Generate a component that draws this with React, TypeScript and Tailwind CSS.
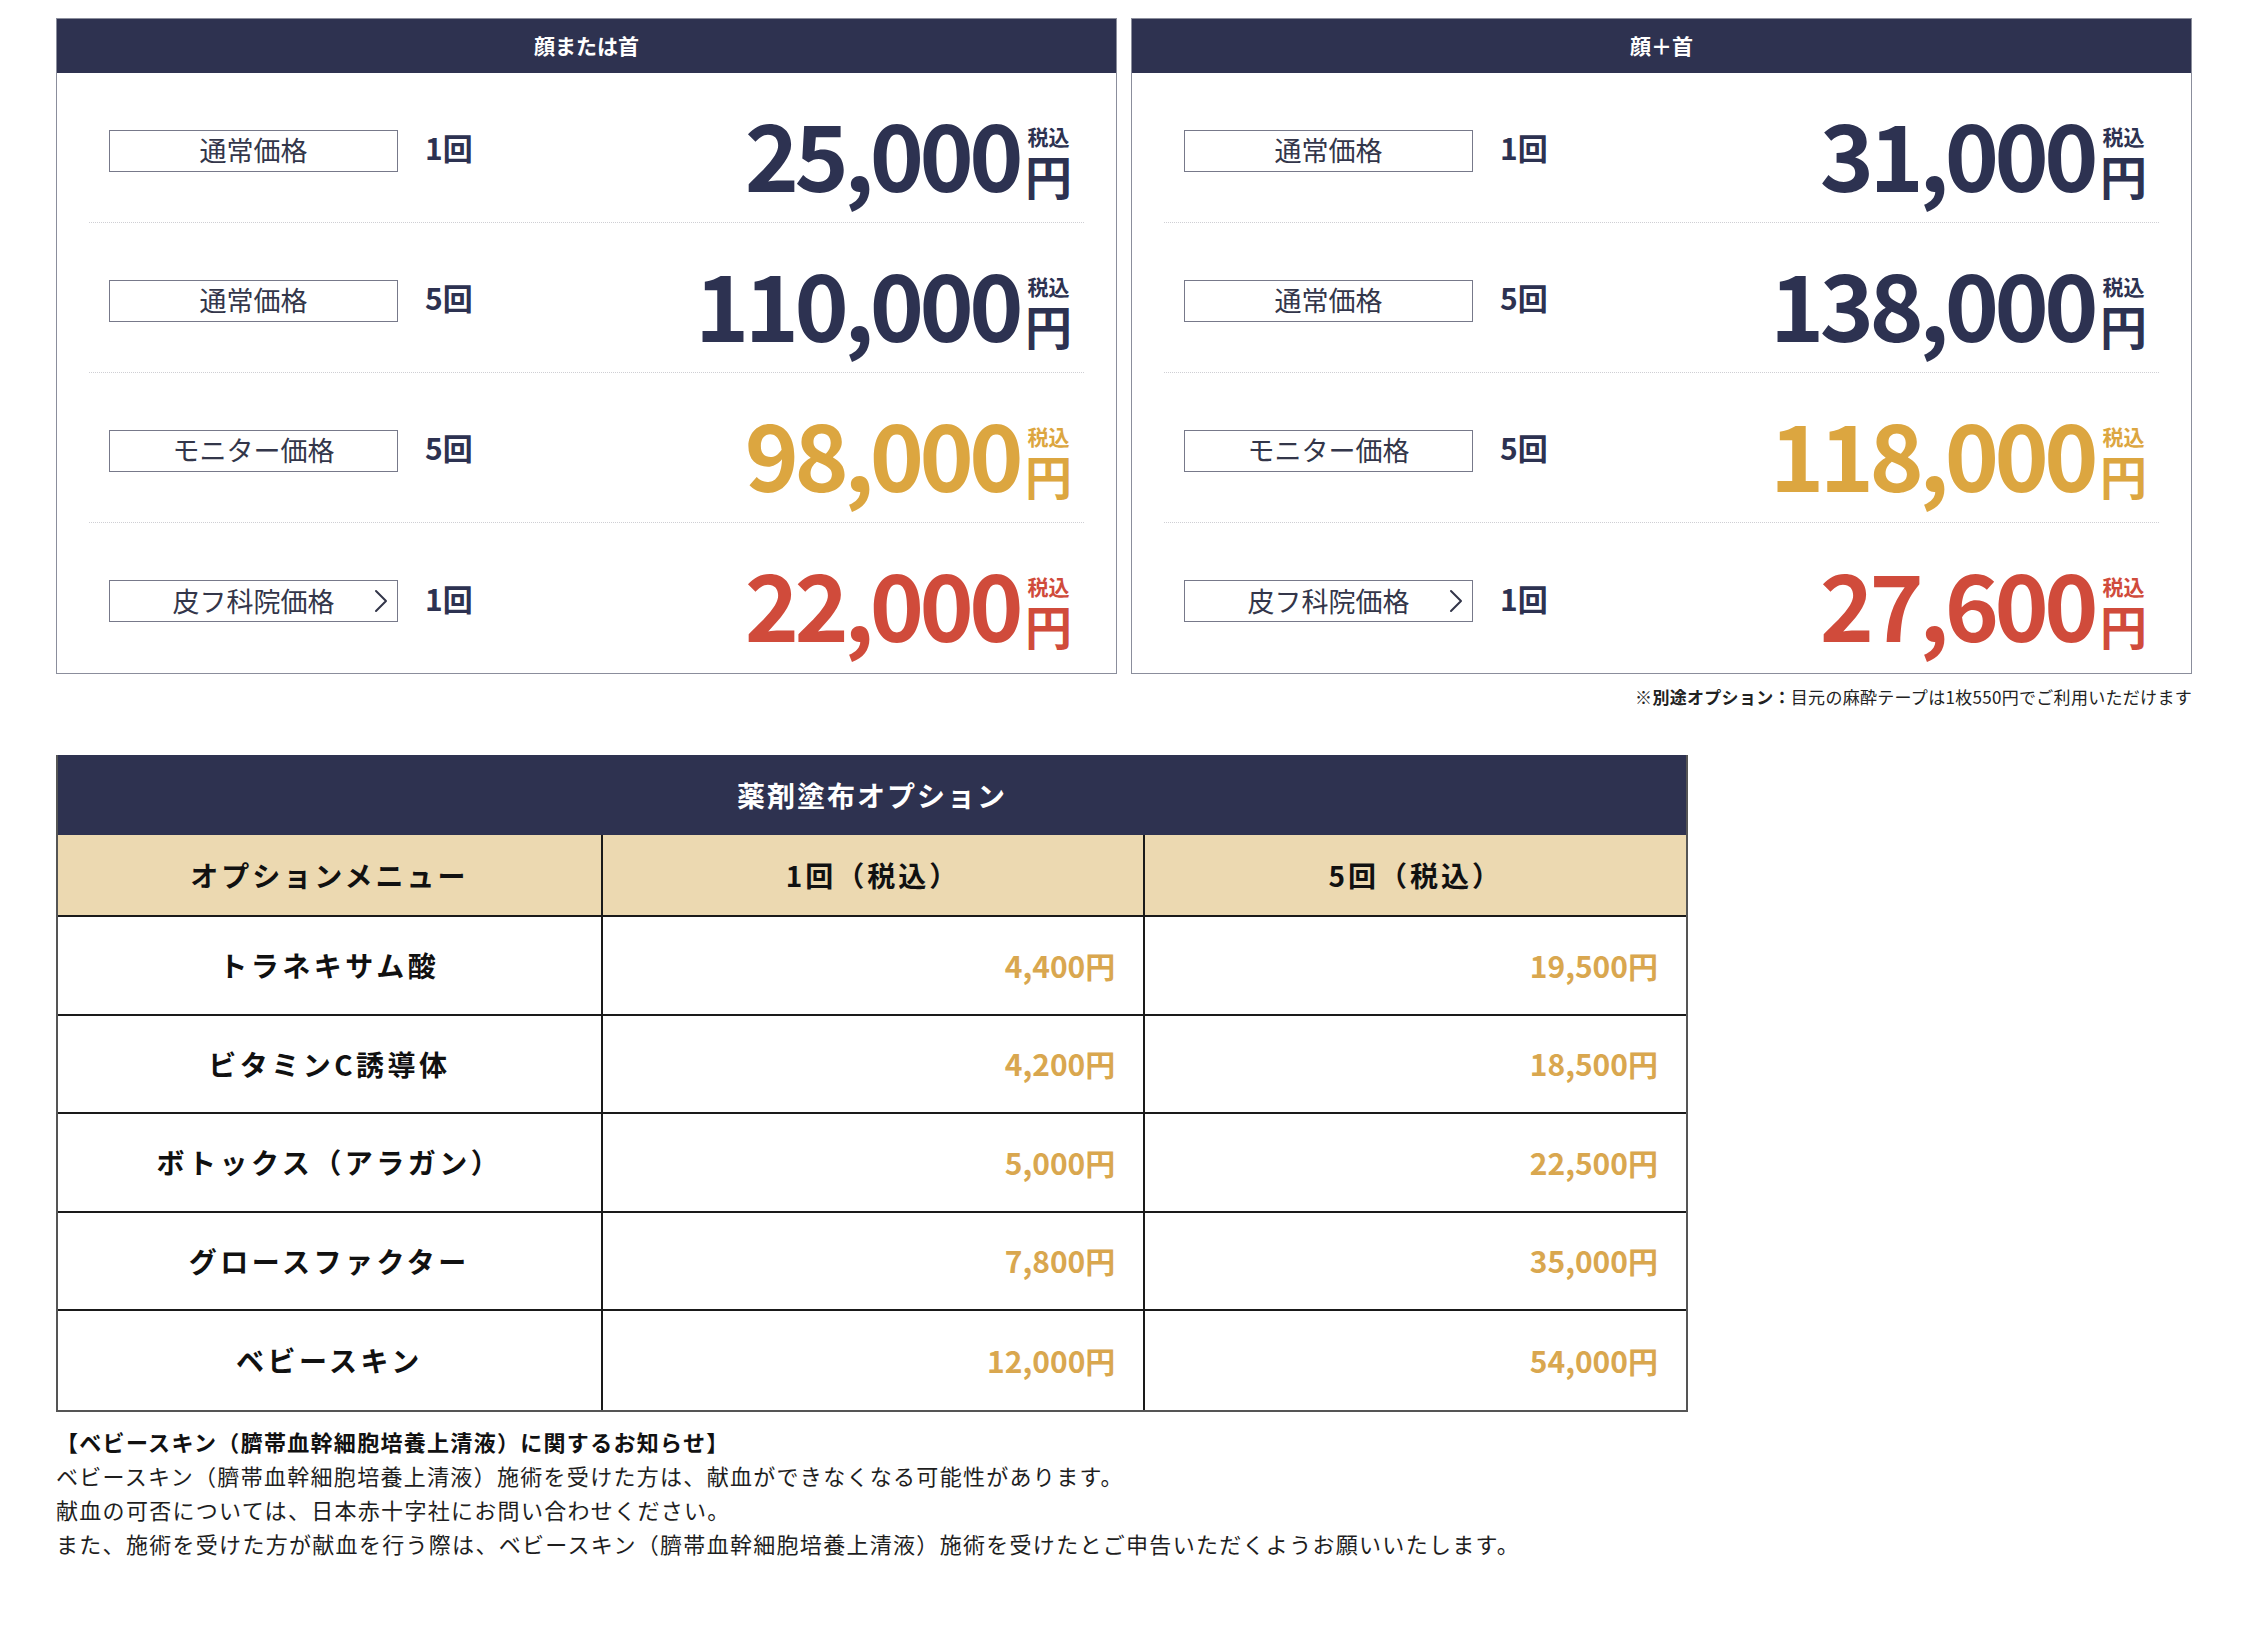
import React from 'react';

type Tone = 'navy' | 'gold' | 'red';

type PriceRow = {
    label: string;
    count: string;
    price: string;
    tone: Tone;
    arrow?: boolean;
};

const toneText: Record<Tone, string> = {
    navy: 'text-[#2d3251]',
    gold: 'text-[#dca640]',
    red: 'text-[#d04b3b]',
};

const faceOrNeck: PriceRow[] = [
    { label: '通常価格', count: '1回', price: '25,000', tone: 'navy' },
    { label: '通常価格', count: '5回', price: '110,000', tone: 'navy' },
    { label: 'モニター価格', count: '5回', price: '98,000', tone: 'gold' },
    { label: '皮フ科院価格', count: '1回', price: '22,000', tone: 'red', arrow: true },
];

const faceAndNeck: PriceRow[] = [
    { label: '通常価格', count: '1回', price: '31,000', tone: 'navy' },
    { label: '通常価格', count: '5回', price: '138,000', tone: 'navy' },
    { label: 'モニター価格', count: '5回', price: '118,000', tone: 'gold' },
    { label: '皮フ科院価格', count: '1回', price: '27,600', tone: 'red', arrow: true },
];

const options = [
    { name: 'トラネキサム酸', once: '4,400円', five: '19,500円' },
    { name: 'ビタミンC誘導体', once: '4,200円', five: '18,500円' },
    { name: 'ボトックス（アラガン）', once: '5,000円', five: '22,500円' },
    { name: 'グロースファクター', once: '7,800円', five: '35,000円' },
    { name: 'ベビースキン', once: '12,000円', five: '54,000円' },
];

const Chevron = () => (
    <svg className="absolute right-[8px] top-1/2 -translate-y-1/2" width="16" height="24" viewBox="0 0 16 24" fill="none">
        <polyline points="3,2 13,12 3,22" stroke="#33364a" strokeWidth="2" strokeLinecap="round" strokeLinejoin="round" />
    </svg>
);

const PriceCard = ({ title, rows }: { title: string; rows: PriceRow[] }) => {
    return (
        <div className="border border-[#8b8e9c] bg-white">
            <div className="h-[54px] bg-[#2e3250] flex items-center justify-center text-white font-bold text-[21px]">
                {title}
            </div>
            <div className="px-[32px]">
                {rows.map((row, index) => (
                    <div
                        key={index}
                        className={
                            index < rows.length - 1
                                ? 'h-[150px] flex items-center border-b border-dotted border-[#cfcfd4]'
                                : 'h-[150px] flex items-center'
                        }
                    >
                        <div className="ml-[20px] mt-[6px] w-[289px] h-[42px] border border-[#77798a] relative flex items-center justify-center text-[27px] text-[#33364a]">
                            {row.label}
                            {row.arrow && <Chevron />}
                        </div>
                        <div className="ml-[27px] text-[30px] font-bold text-[#2d3251]">{row.count}</div>
                        <div className={'ml-auto mr-[12px] flex items-end pt-[8px] ' + toneText[row.tone]}>
                            <span className="text-[92px] font-bold leading-none tracking-[-4.5px] pr-[5px]">{row.price}</span>
                            <span className="ml-[1px] flex flex-col items-center font-bold">
                                <span className="text-[21px] leading-none mb-[4px]">税込</span>
                                <span className="text-[47px] leading-none">円</span>
                            </span>
                        </div>
                    </div>
                ))}
            </div>
        </div>
    );
};

const App = () => {
    return (
        <div className="min-h-screen bg-white font-['Noto_Sans_CJK_JP',sans-serif] text-[#222] pt-[18px] pl-[56px]">
            <div className="w-[2136px] grid grid-cols-2 gap-[14px]">
                <PriceCard title="顔または首" rows={faceOrNeck} />
                <PriceCard title="顔＋首" rows={faceAndNeck} />
            </div>
            <p className="w-[2136px] mt-[11px] text-right text-[17px] leading-[24px] tracking-[0.3px] text-[#222]">
                <span className="font-bold">※別途オプション：</span>目元の麻酔テープは1枚550円でご利用いただけます
            </p>

            <div className="mt-[46px] w-[1632px] border-x-2 border-b-2 border-[#555]">
                <div className="h-[80px] bg-[#2e3250] flex items-center justify-center text-white font-bold text-[28px] tracking-[2px]">
                    薬剤塗布オプション
                </div>
                <div className="h-[82px] grid grid-cols-3 bg-[#ecd9b1] border-b-2 border-[#1a1a1a] font-bold text-[28px] tracking-[3px] text-[#111]">
                    <div className="flex items-center justify-center">オプションメニュー</div>
                    <div className="flex items-center justify-center border-l-2 border-[#1a1a1a]">1回（税込）</div>
                    <div className="flex items-center justify-center border-l-2 border-[#1a1a1a]">5回（税込）</div>
                </div>
                {options.map((option, index) => (
                    <div
                        key={index}
                        className={
                            index < options.length - 1
                                ? 'h-[98.5px] grid grid-cols-3 border-b-2 border-[#1a1a1a]'
                                : 'h-[98.5px] grid grid-cols-3'
                        }
                    >
                        <div className="flex items-center justify-center font-bold text-[28px] tracking-[3.5px] text-[#111]">
                            {option.name}
                        </div>
                        <div className="flex items-center justify-end pr-[28px] border-l-2 border-[#1a1a1a] font-bold text-[30px] text-[#d9a74f]">
                            {option.once}
                        </div>
                        <div className="flex items-center justify-end pr-[28px] border-l-2 border-[#1a1a1a] font-bold text-[30px] text-[#d9a74f]">
                            {option.five}
                        </div>
                    </div>
                ))}
            </div>

            <div className="mt-[12px] text-[22px] leading-[34px] tracking-[1.3px] text-[#1e1e1e]">
                <p className="font-bold text-[#111]">【ベビースキン（臍帯血幹細胞培養上清液）に関するお知らせ】</p>
                <p>ベビースキン（臍帯血幹細胞培養上清液）施術を受けた方は、献血ができなくなる可能性があります。</p>
                <p>献血の可否については、日本赤十字社にお問い合わせください。</p>
                <p>また、施術を受けた方が献血を行う際は、ベビースキン（臍帯血幹細胞培養上清液）施術を受けたとご申告いただくようお願いいたします。</p>
            </div>
        </div>
    );
};

export default App;
